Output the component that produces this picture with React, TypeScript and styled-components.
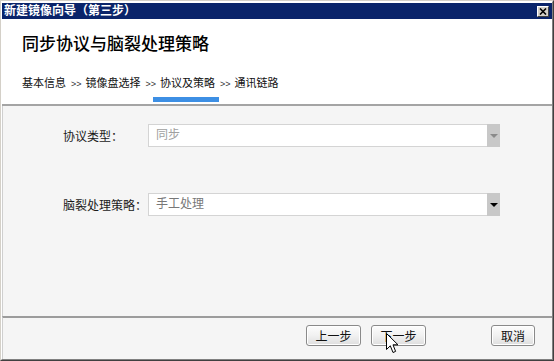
import React from 'react';
import styled, { createGlobalStyle } from 'styled-components';

const GlobalStyle = createGlobalStyle`
   html, body {
      margin: 0;
      padding: 0;
      background: #ffffff;
   }
   body {
      font-family: "Liberation Sans", "Noto Sans CJK SC", sans-serif;
      font-size: 12px;
      color: #000;
   }
`;

const Window = styled.div`
   width: 554px;
   height: 361px;
   box-sizing: border-box;
   display: flex;
   border: 1px solid;
   border-color: #d4d0c8 #404040 #404040 #d4d0c8;
`;

const WindowInner = styled.div`
   flex: 1;
   min-width: 0;
   display: flex;
   flex-direction: column;
   padding-top: 1px;
   border: 1px solid;
   border-color: #ffffff #808080 #808080 #ffffff;
`;

const TitleBar = styled.div`
   height: 16px;
   flex: none;
   display: flex;
   align-items: center;
   justify-content: space-between;
   padding: 0 3px 0 2px;
   background: #0a246a;
   color: #ffffff;
   font-weight: bold;
   font-size: 12px;
   line-height: 16px;
`;

const CloseButton = styled.div`
   width: 12px;
   height: 11px;
   box-sizing: border-box;
   display: flex;
   align-items: center;
   justify-content: center;
   background: #d4d0c8;
   border: 1px solid;
   border-color: #ffffff #404040 #404040 #ffffff;
`;

const Header = styled.div`
   flex: none;
   background: #ffffff;
   padding: 14px 0 2px 20px;
   border-bottom: 2px solid #a4a4a4;
`;

const Heading = styled.div`
   font-size: 17px;
   font-weight: 500;
   line-height: 24px;
   color: #000;
`;

const Steps = styled.div`
   margin-top: 18px;
   display: flex;
   align-items: baseline;
   line-height: 16px;
   font-size: 11px;
   color: #111;
   white-space: pre;
`;

const StepSeparator = styled.span`
   font-size: 9px;
   padding: 0 4px 0 5px;
   color: #333;
`;

const ActiveBar = styled.div`
   margin: 5px 0 0 131px;
   width: 66px;
   height: 5px;
   background: #3d8fe4;
`;

const Body = styled.div`
   flex: 1;
   background: #f5f5f5;
   border-left: 1px solid #cfcfcf;
   padding: 18px 0 0 60px;
   display: grid;
   grid-template-columns: 85px 352px;
   grid-auto-rows: 23px;
   row-gap: 46px;
   align-items: center;
   align-content: start;
`;

const Label = styled.div`
   font-size: 12px;
   color: #1a1a1a;
`;

const Select = styled.div`
   height: 23px;
   box-sizing: border-box;
   display: flex;
   background: #ffffff;
   border: 1px solid #d4d4d4;
   border-right: none;
`;

const SelectValue = styled.div<{ $muted?: boolean }>`
   flex: 1;
   padding-left: 7px;
   line-height: 21px;
   font-size: 12px;
   color: ${(p) => (p.$muted ? '#a0a0a0' : '#777')};
`;

const SelectArrow = styled.div<{ $disabled?: boolean }>`
   width: 13px;
   margin: -1px 0;
   display: flex;
   align-items: center;
   justify-content: center;
   background: #c8c8c8;

   &::after {
      content: '';
      border-left: 4px solid transparent;
      border-right: 4px solid transparent;
      border-top: 4px solid ${(p) => (p.$disabled ? '#8a8a8a' : '#000')};
   }
`;

const Footer = styled.div`
   flex: none;
   height: 43px;
   box-sizing: border-box;
   background: #f5f5f5;
   border-top: 2px solid #9c9c9c;
   border-left: 1px solid #cfcfcf;
   display: flex;
   justify-content: flex-end;
   align-items: flex-start;
   padding: 7px 17px 0 0;
   gap: 10px;
`;

const Button = styled.div<{ $width: number; $gapBefore?: number }>`
   position: relative;
   width: ${(p) => p.$width}px;
   height: 21px;
   box-sizing: border-box;
   margin-left: ${(p) => p.$gapBefore ?? 0}px;
   display: flex;
   align-items: center;
   justify-content: center;
   font-size: 12px;
   color: #111;
   border: 1px solid #8a8a8a;
   border-radius: 3px;
   background: linear-gradient(#fdfdfd, #f1f1f1 50%, #dedede);
   box-shadow: inset 0 0 0 1px #ffffff;
`;

const Pointer = styled.svg`
   position: absolute;
   left: 14px;
   top: 7px;
`;

function App() {
   const steps = ['基本信息', '镜像盘选择', '协议及策略', '通讯链路'];

   return (
      <>
         <GlobalStyle />
         <Window>
            <WindowInner>
               <TitleBar>
                  <span>新建镜像向导（第三步）</span>
                  <CloseButton>
                     <svg width="8" height="7" viewBox="0 0 8 7">
                        <path d="M1 0.5 L7 6.5 M7 0.5 L1 6.5" stroke="#000" strokeWidth="1.6" />
                     </svg>
                  </CloseButton>
               </TitleBar>
               <Header>
                  <Heading>同步协议与脑裂处理策略</Heading>
                  <Steps>
                     {steps.map((s, i) => (
                        <React.Fragment key={s}>
                           {i > 0 && <StepSeparator>&gt;&gt;</StepSeparator>}
                           <span>{s}</span>
                        </React.Fragment>
                     ))}
                  </Steps>
                  <ActiveBar />
               </Header>
               <Body>
                  <Label>协议类型：</Label>
                  <Select>
                     <SelectValue $muted>同步</SelectValue>
                     <SelectArrow $disabled />
                  </Select>
                  <Label>脑裂处理策略：</Label>
                  <Select>
                     <SelectValue>手工处理</SelectValue>
                     <SelectArrow />
                  </Select>
               </Body>
               <Footer>
                  <Button $width={55}>上一步</Button>
                  <Button $width={55}>
                     下一步
                     <Pointer width="13" height="21" viewBox="0 0 13 21">
                        <path
                           d="M0.5 0.5 L0.5 16.5 L4.3 12.8 L7 19.5 L9.6 18.4 L7 11.8 L12 11.8 Z"
                           fill="#fff"
                           stroke="#000"
                           strokeWidth="1"
                           strokeLinejoin="miter"
                        />
                     </Pointer>
                  </Button>
                  <Button $width={44} $gapBefore={55}>
                     取消
                  </Button>
               </Footer>
            </WindowInner>
         </Window>
      </>
   );
}

export default App;
